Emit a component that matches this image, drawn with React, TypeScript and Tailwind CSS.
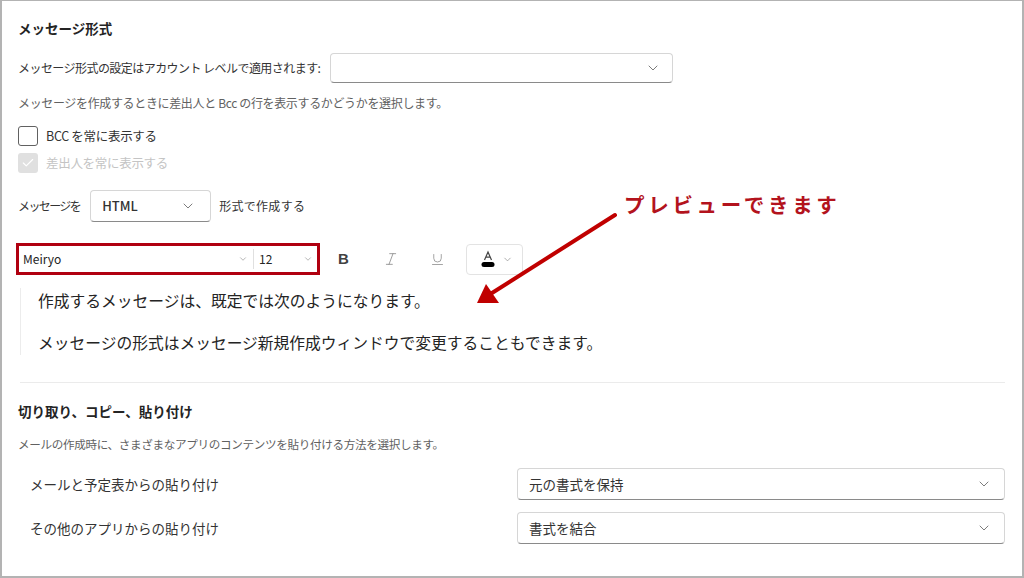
import React from 'react';
import { ChevronDown, Check, Italic, Underline } from 'lucide-react';

const jp = { fontFamily: '"Noto Sans CJK JP", "Noto Sans", sans-serif' };

const Select: React.FC<{ value?: string; className?: string; textClass?: string }> = ({ value, className, textClass }) => (
  <div
    className={`flex items-center justify-between bg-white border border-[#d6d6d6] border-b-[#8a8a8a] rounded-[4px] ${className ?? ''}`}
  >
    <span className={textClass}>{value}</span>
    <ChevronDown className="w-4 h-4 text-[#616161]" strokeWidth={1.25} />
  </div>
);

const App: React.FC = () => {
  return (
    <div
      className="relative w-[1024px] h-[578px] overflow-hidden bg-white border-t border-l-2 border-r-2 border-b-2 border-[#b3b3b3] text-[#242424]"
      style={jp}
    >
      <div className="pl-[16px] pr-[17px] pt-[17px] flex flex-col">
        {/* メッセージ形式 */}
        <h2 className="h-[20px] leading-[20px] text-[13.5px] font-bold">メッセージ形式</h2>

        <div className="mt-[15px] flex items-center">
          <span className="text-[12px] tracking-[-0.55px] text-[#333]">メッセージ形式の設定はアカウント レベルで適用されます:</span>
          <Select className="ml-[10px] w-[343px] h-[30px] pr-[11px]" />
        </div>

        <p className="mt-[11px] h-[18px] leading-[18px] text-[12px] tracking-[-0.35px] text-[#616161]">
          メッセージを作成するときに差出人と Bcc の行を表示するかどうかを選択します。
        </p>

        <label className="mt-[14px] flex items-center h-[20px]">
          <span className="w-[20px] h-[20px] rounded-[3px] border border-[#616161] bg-white" />
          <span className="ml-[8px] text-[12.5px] tracking-[-0.3px] text-[#333]">BCC を常に表示する</span>
        </label>

        <label className="mt-[7px] flex items-center h-[20px]">
          <span className="w-[20px] h-[20px] rounded-[3px] bg-[#e0e0e0] flex items-center justify-center">
            <Check className="w-[14px] h-[14px] text-white" strokeWidth={2} />
          </span>
          <span className="ml-[8px] text-[12.5px] tracking-[-0.3px] text-[#c4c4c4]">差出人を常に表示する</span>
        </label>

        <div className="mt-[17px] flex items-center h-[32px]">
          <span className="text-[12px] tracking-[-1.6px] text-[#333]">メッセージを</span>
          <Select
            value="HTML"
            className="ml-[10px] w-[121px] h-[32px] pl-[11px] pr-[14px]"
            textClass="text-[13px] font-medium text-[#333]"
          />
          <span className="ml-[8px] text-[12px] tracking-[0.3px] text-[#333]">形式で作成する</span>
        </div>

        {/* toolbar */}
        <div className="mt-[21px] -ml-[2px] flex items-center h-[32px]">
          <div className="w-[304px] h-[32px] border-[3px] border-[#b00010] flex items-center bg-white">
            <div className="flex-1 flex items-center justify-between pl-[4px] pr-[5px] h-full">
              <span className="text-[12px] text-[#242424]">Meiryo</span>
              <ChevronDown className="w-[10px] h-[10px] text-[#8a8a8a]" strokeWidth={1.5} />
            </div>
            <div className="w-px h-[20px] bg-[#e0e0e0]" />
            <div className="w-[63px] flex items-center justify-between pl-[5px] pr-[4px] h-full">
              <span className="text-[12px] text-[#242424]">12</span>
              <ChevronDown className="w-[10px] h-[10px] text-[#8a8a8a]" strokeWidth={1.5} />
            </div>
          </div>
          <div className="w-[47px] flex justify-center">
            <span className="text-[15px] font-bold text-[#424242]" style={{ fontFamily: '"Liberation Sans", sans-serif' }}>B</span>
          </div>
          <div className="w-[47px] flex justify-center">
            <Italic className="w-[16px] h-[16px] text-[#8a8a8a]" strokeWidth={1.25} />
          </div>
          <div className="w-[47px] flex justify-center">
            <Underline className="w-[15px] h-[15px] text-[#8a8a8a]" strokeWidth={1.25} />
          </div>
          <div className="ml-[5px] w-[57px] h-[31px] border border-[#e3e3e3] rounded-[4px] flex items-center pl-[13px] gap-[6px]">
            <svg width="16" height="18" viewBox="0 0 16 18">
              <path d="M4.5 10 L8 2 L11.5 10 M5.8 7.2 H10.2" fill="none" stroke="#444" strokeWidth="1.2" />
              <rect x="1.5" y="12" width="13" height="5" rx="2.5" fill="#000" />
            </svg>
            <ChevronDown className="w-[11px] h-[11px] text-[#8a8a8a]" strokeWidth={1.5} />
          </div>
        </div>

        {/* preview */}
        <div className="mt-[13px] ml-[2px] border-l border-[#ececec] pl-[17px] pt-[1px] flex flex-col gap-[18px]">
          <p className="h-[24px] leading-[24px] text-[15.75px] text-[#242424]">作成するメッセージは、既定では次のようになります。</p>
          <p className="h-[24px] leading-[24px] text-[15.75px] text-[#242424]">メッセージの形式はメッセージ新規作成ウィンドウで変更することもできます。</p>
        </div>

        <div className="mt-[27px] h-px bg-[#ebebeb] ml-[2px]" />

        {/* 切り取り、コピー、貼り付け */}
        <h2 className="mt-[18px] h-[20px] leading-[20px] text-[13.5px] font-bold">切り取り、コピー、貼り付け</h2>
        <p className="mt-[14px] h-[18px] leading-[18px] text-[11.6px] tracking-[-0.35px] text-[#616161]">
          メールの作成時に、さまざまなアプリのコンテンツを貼り付ける方法を選択します。
        </p>

        <div className="mt-[15px] flex items-center justify-between pl-[12px]">
          <span className="text-[13.5px] text-[#333]">メールと予定表からの貼り付け</span>
          <Select
            value="元の書式を保持"
            className="w-[488px] h-[32px] pl-[11px] pr-[12px]"
            textClass="text-[13.5px] text-[#333]"
          />
        </div>
        <div className="mt-[12px] flex items-center justify-between pl-[12px]">
          <span className="text-[13.5px] text-[#333]">その他のアプリからの貼り付け</span>
          <Select
            value="書式を結合"
            className="w-[488px] h-[32px] pl-[11px] pr-[12px]"
            textClass="text-[13.5px] text-[#333]"
          />
        </div>
      </div>

      {/* annotation */}
      <div className="absolute left-[622px] top-[189px] text-[20.5px] font-bold tracking-[3.7px] text-[#b3131d] leading-[28px]">
        プレビューできます
      </div>
      <svg className="absolute left-0 top-0 pointer-events-none" width="1024" height="578">
        <line x1="613" y1="214" x2="490" y2="292" stroke="#c00000" strokeWidth="4" strokeLinecap="round" />
        <polygon points="475,302 484,283 497,302" fill="#c00000" />
      </svg>
    </div>
  );
};

export default App;
